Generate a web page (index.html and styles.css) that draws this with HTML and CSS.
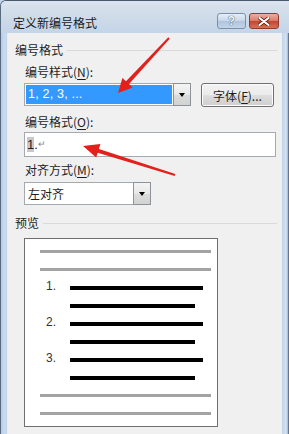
FILE: index.html
```html
<!DOCTYPE html>
<html>
  <head>
    <meta charset="utf-8" />
    <title>定义新编号格式</title>
    <meta name="viewport" content="width=device-width, initial-scale=1" />
    <link rel="stylesheet" href="styles.css">
  </head>
  <body>
    <div class="window">
      <div class="titlebar">
        <span class="title">定义新编号格式</span>
        <div class="caption-buttons">
          <span class="btn-help">?</span>
          <span class="btn-close">
            <svg width="12" height="9" viewBox="0 0 12 9">
              <path d="M1.5 1 L10.5 8 M10.5 1 L1.5 8" stroke="#5a1a10" stroke-width="3.6" stroke-linecap="round" />
              <path d="M1.5 1 L10.5 8 M10.5 1 L1.5 8" stroke="#fff" stroke-width="2.2" stroke-linecap="round" />
            </svg>
          </span>
        </div>
      </div>

      <div class="client">
        <div class="group-label"><span>编号格式</span></div>

        <div class="field">
          <div class="field-label">编号样式(<u>N</u>):</div>
          <div class="row">
            <div class="combo combo-style">
              <div class="combo-value selected">1, 2, 3, ...</div>
              <div class="combo-drop"><i></i></div>
            </div>
            <div class="button">字体(<u>F</u>)...</div>
          </div>
        </div>

        <div class="field field-format">
          <div class="field-label">编号格式(<u>O</u>):</div>
          <div class="textbox"><span class="hl">1</span>.<span class="para">↵</span></div>
        </div>

        <div class="field field-align">
          <div class="field-label">对齐方式(<u>M</u>):</div>
          <div class="combo combo-align">
            <div class="combo-value">左对齐</div>
            <div class="combo-drop"><i></i></div>
          </div>
        </div>

        <div class="group-label group-preview"><span>预览</span></div>

        <div class="preview">
          <div class="pline grey"></div>
          <div class="pline grey"></div>
          <div class="item"><span class="num">1.</span><div class="pline black"></div></div>
          <div class="item"><span class="num"></span><div class="pline black short"></div></div>
          <div class="item"><span class="num">2.</span><div class="pline black"></div></div>
          <div class="item"><span class="num"></span><div class="pline black short"></div></div>
          <div class="item"><span class="num">3.</span><div class="pline black"></div></div>
          <div class="item"><span class="num"></span><div class="pline black short"></div></div>
          <div class="pline grey"></div>
          <div class="pline grey"></div>
        </div>
      </div>

      <!-- red annotation arrows drawn over the dialog -->
      <svg class="arrows" width="289" height="434" viewBox="0 0 289 434">
        <polygon fill="#e3211c" points="169.7,38.7 168.3,37.3 126.0,81.3 122.4,77.9 118,93 132.6,87.5 129.0,84.1" />
        <polygon fill="#e3211c" points="175.3,174.0 174.7,176.0 97.7,152.7 96.2,157.5 83,146 100.4,144.1 98.9,148.9" />
      </svg>
    </div>
  </body>
</html>
```

FILE: styles.css
```css
body,
html {
  margin: 0;
  padding: 0;
  width: 100%;
  height: 100%;
  overflow: hidden;
}
body {
  background-color: #c2d6ec;
  font-family: "Noto Sans CJK SC", "Noto Sans", sans-serif;
  font-size: 12px;
  color: #1e1e1e;
}

.window {
  position: relative;
  width: 289px;
  height: 434px;
  box-sizing: border-box;
  background: linear-gradient(to right, #b3cbe6 0, #c8daee 3px, #c2d6ec 6px, #c2d6ec 282px, #d6e4f2 285px, #9fb9d8 287px, #2c3540 288px);
  border-top-left-radius: 6px;
  border-top: 1px solid #4a5a6e;
  border-left: 1px solid #5a6a80;
  display: flex;
  flex-direction: column;
  overflow: hidden;
}

.titlebar {
  height: 32px;
  box-sizing: border-box;
  padding: 12px 10px 0 12px;
  display: flex;
  justify-content: space-between;
  align-items: flex-start;
  background: linear-gradient(to bottom, #dbe4ee, #ccd9e8 60%, #c4d5e9);
}
.title {
  line-height: 20px;
  font-size: 12px;
  color: #1a1a1a;
}
.caption-buttons {
  display: flex;
  gap: 3px;
}
.btn-help,
.btn-close {
  height: 16px;
  box-sizing: border-box;
  border-radius: 3px;
  display: flex;
  align-items: center;
  justify-content: center;
}
.btn-help {
  width: 29px;
  border: 1px solid #7c90ab;
  background: linear-gradient(to bottom, #e6eef7, #c6d6e9 50%, #aec3dc 51%, #c3d4e8);
  color: #f4f7fb;
  font-family: "Liberation Sans", sans-serif;
  font-weight: bold;
  font-size: 12px;
  text-shadow: 0 0 1px #3d4b5c, 0 0 1px #3d4b5c;
}
.btn-close {
  width: 30px;
  border: 1px solid #8e3b30;
  background: linear-gradient(to bottom, #eab0a4, #d97a66 50%, #c6442c 51%, #d5705a);
}

.client {
  flex: 1;
  margin: 0 7px 0 6px;
  padding: 10px 5px 0 7px;
  background-color: #f0f0f0;
  border-left: 1px solid #e4ecf4;
}

.group-label {
  display: flex;
  align-items: center;
  gap: 4px;
  line-height: 14px;
  height: 14px;
}
.group-label::after {
  content: "";
  flex: 1;
  height: 1px;
  background-color: #d9d9d9;
}
.group-preview {
  margin-top: 11px;
}

.field {
  margin-left: 9px;
  margin-top: 8px;
}
.field-label {
  line-height: 14px;
  padding-left: 1px;
  margin-bottom: 4px;
}
.field-format {
  margin-top: 8px;
}
.field-format .field-label {
  margin-bottom: 3px;
}
.field-align {
  margin-top: 6px;
}
.field-align .field-label {
  margin-bottom: 5px;
}
u {
  text-decoration-thickness: 1px;
  text-underline-offset: 2px;
}

.row {
  display: flex;
  align-items: flex-start;
  gap: 10px;
}

.combo {
  height: 23px;
  box-sizing: border-box;
  border: 1px solid #a5a9b0;
  background-color: #fff;
  display: flex;
  padding: 1px 0 1px 1px;
}
.combo-style {
  width: 167px;
}
.combo-align {
  width: 127px;
}
.combo-value {
  flex: 1;
  line-height: 19px;
  padding-left: 2px;
  white-space: nowrap;
}
.combo-value.selected {
  background-color: #3399ff;
  color: #fff;
  font-family: "Liberation Sans", sans-serif;
  font-size: 12.5px;
  letter-spacing: 0.2px;
  margin-right: 1px;
}
.combo-drop {
  width: 16px;
  margin: -2px -1px -2px 0;
  border: 1px solid #8d9299;
  background: linear-gradient(to bottom, #f4f4f4, #e8e8e8 50%, #dcdcdc 51%, #d2d2d2);
  display: flex;
  align-items: center;
  justify-content: center;
}
.combo-drop i {
  width: 0;
  height: 0;
  border-left: 3.5px solid transparent;
  border-right: 3.5px solid transparent;
  border-top: 4px solid #000;
}

.button {
  width: 73px;
  height: 24px;
  box-sizing: border-box;
  border: 1px solid #707070;
  border-radius: 3px;
  background: linear-gradient(to bottom, #f2f2f2, #ebebeb 50%, #dddddd 51%, #cfcfcf);
  display: flex;
  align-items: center;
  justify-content: center;
  box-shadow: inset 0 0 0 1px #fcfcfc;
}

.textbox {
  width: 252px;
  height: 25px;
  box-sizing: border-box;
  border: 1px solid #a5a9b0;
  background-color: #fff;
  padding-left: 2px;
  line-height: 23px;
  font-family: "Liberation Sans", sans-serif;
  font-size: 13px;
  color: #222;
}
.textbox .hl {
  background-color: #c8c8c8;
}
.textbox .para {
  font-size: 9px;
  color: #888;
  vertical-align: 2px;
}

.preview {
  margin: 8px 0 0 9px;
  width: 194px;
  height: 189px;
  box-sizing: border-box;
  border: 1px solid #6f6f6f;
  background-color: #fff;
  padding: 11px 0 0 15px;
  display: flex;
  flex-direction: column;
  gap: 14px;
}
.pline {
  height: 4px;
}
.pline.grey {
  width: 171px;
  height: 3px;
  margin-bottom: 1px;
  background-color: #a3a3a3;
}
.pline.black {
  width: 133px;
  background-color: #000;
}
.pline.black.short {
  width: 125px;
}
.item {
  display: flex;
  align-items: center;
  height: 4px;
  padding-left: 6px;
}
.num {
  width: 24px;
  line-height: 4px;
  margin-top: -4px;
  font-family: "Liberation Sans", sans-serif;
  font-size: 12px;
  color: #333;
}

.arrows {
  position: absolute;
  left: -1px;
  top: -1px;
  pointer-events: none;
}
```
